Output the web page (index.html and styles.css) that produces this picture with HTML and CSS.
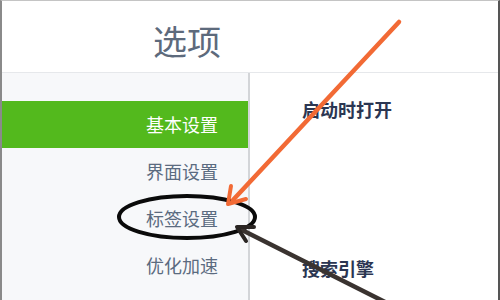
FILE: index.html
```html
<!DOCTYPE html>
<html lang="zh">
<head>
<meta charset="utf-8">
<link rel="stylesheet" href="styles.css">
</head>
<body>
<div class="frame">
  <header class="header"><h1 class="title">选项</h1></header>
  <div class="main">
    <nav class="sidebar">
      <div class="item active">基本设置</div>
      <div class="item">界面设置</div>
      <div class="item">标签设置</div>
      <div class="item">优化加速</div>
    </nav>
    <section class="content">
      <h2 class="section-title first">启动时打开</h2>
      <h2 class="section-title second">搜索引擎</h2>
    </section>
  </div>
  <svg class="annot" width="500" height="300" viewBox="0 0 500 300">
    <ellipse cx="187" cy="217" rx="68" ry="21" fill="none" stroke="#0a0a0a" stroke-width="4"/>
    <line x1="399" y1="22" x2="233" y2="200" stroke="#f26a35" stroke-width="4.5" stroke-linecap="round"/>
    <path d="M228 204 L231 186 M228 204 L246 199" stroke="#f26a35" stroke-width="4" stroke-linecap="round" fill="none"/>
    <line x1="385" y1="302" x2="240" y2="229" stroke="#3a3330" stroke-width="4.5" stroke-linecap="round"/>
    <path d="M237 227 L254 227 M237 227 L246 241" stroke="#2a2523" stroke-width="4" stroke-linecap="round" fill="none"/>
  </svg>
</div>
</body>
</html>
```
FILE: styles.css
```css
* { box-sizing: border-box; }
html, body { margin: 0; padding: 0; background: #fff; }
body { font-family: "Noto Sans CJK SC", "Noto Sans", sans-serif; }
.frame {
  position: relative;
  width: 500px;
  height: 300px;
  overflow: hidden;
  border-top: 1px solid #c4c4c4;
  border-left: 2px solid #8a8a8a;
  border-right: 2px solid #555;
  background: #fff;
  display: flex;
  flex-direction: column;
}
.header {
  height: 72px;
  border-bottom: 1px solid #e6e8eb;
  display: flex;
  align-items: center;
  padding-left: 151px;
  flex-shrink: 0;
}
.title {
  margin: 0;
  font-size: 34px;
  font-weight: 400;
  color: #5d6a7c;
  line-height: 1;
  margin-top: 8px;
}
.main { display: flex; flex: 1; }
.sidebar {
  width: 248px;
  background: #f7f8fa;
  border-right: 2px solid #d3d5d8;
  padding-top: 28px;
  flex-shrink: 0;
}
.item {
  height: 47px;
  line-height: 47px;
  text-align: right;
  padding-right: 30px;
  font-size: 18px;
  color: #5b6b80;
}
.item.active { background: #53b91d; color: #fff; }
.content { flex: 1; padding-left: 52px; display: flex; flex-direction: column; }
.section-title {
  margin: 0;
  font-size: 18px;
  font-weight: 700;
  color: #2b3652;
  line-height: 22px;
}
.section-title.first { margin-top: 25px; }
.section-title.second { margin-top: 137px; }
.annot { position: absolute; left: -2px; top: -1px; pointer-events: none; }
```
